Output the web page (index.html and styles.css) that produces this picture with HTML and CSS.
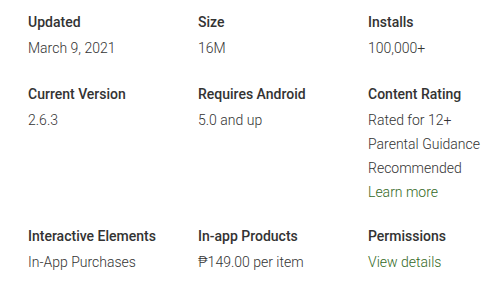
FILE: index.html
```html
<!DOCTYPE html>
<html>
<head>
<meta charset="utf-8">
<link rel="stylesheet" href="styles.css">
</head>
<body>
<div class="info">
  <div class="cell">
    <div class="label">Updated</div>
    <div class="value">March 9, 2021</div>
  </div>
  <div class="cell">
    <div class="label">Size</div>
    <div class="value">16M</div>
  </div>
  <div class="cell">
    <div class="label">Installs</div>
    <div class="value">100,000+</div>
  </div>
  <div class="cell">
    <div class="label">Current Version</div>
    <div class="value">2.6.3</div>
  </div>
  <div class="cell">
    <div class="label">Requires Android</div>
    <div class="value">5.0 and up</div>
  </div>
  <div class="cell">
    <div class="label">Content Rating</div>
    <div class="value">
      <div>Rated for 12+</div>
      <div>Parental Guidance Recommended</div>
      <div class="last"><a class="link" href="#">Learn more</a></div>
    </div>
  </div>
  <div class="cell">
    <div class="label">Interactive Elements</div>
    <div class="value">In-App Purchases</div>
  </div>
  <div class="cell">
    <div class="label">In-app Products</div>
    <div class="value">&#8369;149.00 per item</div>
  </div>
  <div class="cell">
    <div class="label">Permissions</div>
    <div class="value"><a class="link" href="#">View details</a></div>
  </div>
</div>
</body>
</html>
```

FILE: styles.css
```css
html, body {
  margin: 0;
  padding: 0;
  background: #ffffff;
}

body {
  font-family: Roboto, "Liberation Sans", Arial, sans-serif;
  font-size: 14px;
  color: #333333;
}

.info {
  display: grid;
  grid-template-columns: 170px 170px 1fr;
  row-gap: 22px;
  padding: 10px 0 0 28px;
}

.label {
  font-weight: 500;
  line-height: 24px;
  margin-bottom: 2px;
  color: #333333;
}

.value {
  font-weight: 300;
  line-height: 24px;
  color: #333333;
}

.last {
  margin-bottom: -2px;
}

.link {
  color: #33691e;
  text-decoration: none;
}
```
